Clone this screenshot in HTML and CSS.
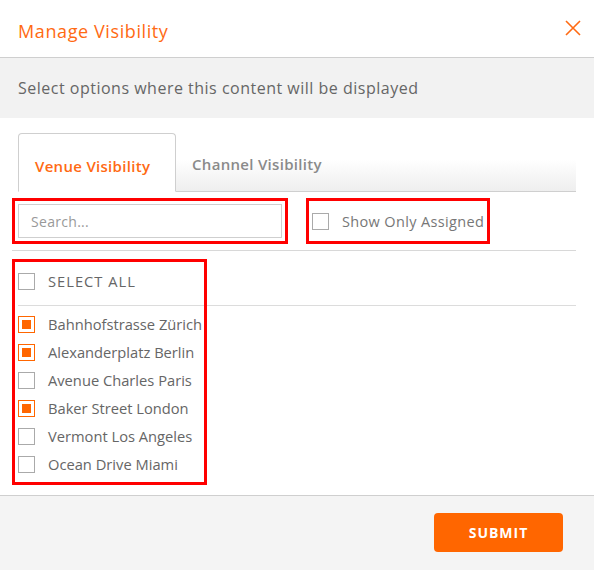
FILE: index.html
```html
<!DOCTYPE html>
<html lang="en">
<head>
<meta charset="utf-8">
<title>Manage Visibility</title>
<link rel="stylesheet" href="styles.css">
</head>
<body>
<div class="modal">
  <header class="modal-header">
    <h1 class="title">Manage Visibility</h1>
    <button class="close" aria-label="Close">
      <svg width="16" height="16" viewBox="0 0 16 16"><path d="M1 1L15 15M15 1L1 15" stroke="#ff6a13" stroke-width="1.6" fill="none"/></svg>
    </button>
  </header>
  <div class="subheader">Select options where this content will be displayed</div>
  <div class="content">
    <div class="tabs">
      <div class="tab active">Venue Visibility</div>
      <div class="tab">Channel Visibility</div>
    </div>
    <div class="filters">
      <input class="search annot" type="text" placeholder="Search...">
      <label class="assigned annot"><span class="cb"></span><span class="assigned-text">Show Only Assigned</span></label>
    </div>
    <div class="list">
      <div class="row select-all"><span class="cb"></span>SELECT ALL</div>
      <div class="items">
        <div class="row"><span class="cb checked"></span>Bahnhofstrasse Zürich</div>
        <div class="row"><span class="cb checked"></span>Alexanderplatz Berlin</div>
        <div class="row"><span class="cb"></span>Avenue Charles Paris</div>
        <div class="row"><span class="cb checked"></span>Baker Street London</div>
        <div class="row"><span class="cb"></span>Vermont Los Angeles</div>
        <div class="row"><span class="cb"></span>Ocean Drive Miami</div>
      </div>
      <div class="list-annot"></div>
    </div>
  </div>
  <footer class="modal-footer">
    <button class="submit">SUBMIT</button>
  </footer>
</div>
</body>
</html>
```
FILE: styles.css
```css
* { box-sizing: border-box; }
html, body { margin: 0; padding: 0; background: #fff; }
body { font-family: "Open Sans", "DejaVu Sans", sans-serif; color: #666; }
.modal { width: 594px; height: 570px; display: flex; flex-direction: column; }
.modal-header {
  height: 58px; border-bottom: 1px solid #cfcfcf;
  display: flex; align-items: center; justify-content: space-between;
  padding: 4px 13px 0 18px;
}
.title { margin: 0; font-size: 18px; font-weight: 400; color: #ff6a13; letter-spacing: 0.6px; }
.close { border: 0; background: none; padding: 0; display: flex; cursor: pointer; margin-top: -6px; }
.subheader {
  height: 60px; background: #f2f2f2; display: flex; align-items: center;
  padding: 0 18px; font-size: 16px; letter-spacing: 0.5px; color: #666;
}
.content { padding: 15px 18px 0; flex: 1; }
.tabs {
  display: flex; height: 59px; border-bottom: 1px solid #cfcfcf;
  background: linear-gradient(to bottom, #fff 45%, #eeeeee 100%);
}
.tab {
  display: flex; align-items: center; padding: 4px 16px 0; font-size: 15px; font-weight: 600;
  letter-spacing: 0.3px; color: #8a8a8a;
}
.tab.active {
  width: 158px; background: #fff; color: #ff6a13; margin-bottom: -1px;
  border: 1px solid #cfcfcf; border-bottom-color: #fff; border-radius: 4px 4px 0 0;
  padding-top: 6px;
}
.filters {
  height: 59px; display: flex; align-items: center; gap: 30px;
  border-bottom: 1px solid #d8d8d8; margin-left: -6px; padding-left: 6px;
}
.annot { outline: 3px solid #ff0000; outline-offset: 3px; }
.search {
  width: 264px; height: 34px; border: 1px solid #cfcfcf; padding: 0 12px;
  font-family: inherit; font-size: 14px; letter-spacing: 0.3px; color: #666;
}
.search::placeholder { color: #999; }
.assigned {
  width: 172px; height: 34px; display: flex; align-items: center; gap: 13px;
  font-size: 14.5px; letter-spacing: 0.35px; color: #777; white-space: nowrap;
}
.assigned-text { flex: none; }
.cb {
  width: 17px; height: 17px; border: 1px solid #aaa; background: #fff;
  display: inline-flex; align-items: center; justify-content: center; flex: none;
}
.cb.checked { border-color: #ff6600; }
.cb.checked::after { content: ""; width: 9px; height: 9px; background: #ff6600; }
.list { position: relative; padding-top: 6px; }
.row { display: flex; align-items: center; gap: 13px; font-size: 14.7px; color: #666; height: 28px; }
.select-all { height: 49px; border-bottom: 1px solid #dcdcdc; letter-spacing: 1px; }
.items { padding-top: 4px; }
.list-annot {
  position: absolute; left: -6px; top: 8px; width: 195px; height: 226px;
  border: 3px solid #ff0000; pointer-events: none;
}
.modal-footer {
  height: 75px; border-top: 1px solid #cfcfcf; background: #f4f4f4;
  display: flex; align-items: center; justify-content: flex-end; padding: 0 31px 2px 0;
}
.submit {
  width: 129px; height: 39px; border: 0; border-radius: 4px; background: #ff6600; color: #fff;
  font-family: inherit; font-size: 14px; font-weight: 700; letter-spacing: 1px;
}
```
